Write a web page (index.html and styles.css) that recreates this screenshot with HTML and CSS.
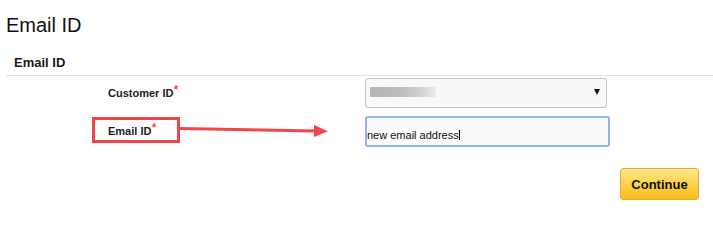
FILE: index.html
```html
<!DOCTYPE html>
<html lang="en">
<head>
<meta charset="utf-8">
<title>Email ID</title>
<link rel="stylesheet" href="styles.css">
</head>
<body>
<div class="page">
  <h1 class="title">Email ID</h1>
  <h2 class="section-head">Email ID</h2>
  <div class="form">
    <div class="label">Customer ID<span class="req">*</span></div>
    <div class="select">
      <span class="blurred"></span>
      <span class="caret-down"></span>
    </div>
    <div class="label">Email ID<span class="req">*</span></div>
    <div class="text-field">new email address<span class="cursor"></span></div>
  </div>
  <div class="actions">
    <button class="btn-continue" type="button">Continue</button>
  </div>
  <div class="annot-box"></div>
  <svg class="annot-arrow" width="152" height="20" viewBox="0 0 152 20">
    <path d="M3 8.5 L138 11" stroke="#f4454a" stroke-width="3.2" fill="none" stroke-linecap="round"/>
    <polygon points="136,5 150,11.3 136,17" fill="#f4454a"/>
  </svg>
</div>
</body>
</html>
```
FILE: styles.css
```css
body {
  margin: 0;
  background: #fff;
  color: #111;
  font-family: "Liberation Sans", Arial, sans-serif;
}

.page {
  position: relative;
  height: 208px;
  box-sizing: border-box;
  padding-top: 13px;
}

.title {
  margin: 0 0 0 6px;
  font-size: 20px;
  font-weight: normal;
  line-height: 24px;
  color: #111;
}

.section-head {
  margin: 18px 0 0 6px;
  padding: 0 0 4px 8px;
  font-size: 13px;
  font-weight: bold;
  line-height: 16px;
  color: #1a1a1a;
  border-bottom: 1px solid #e2e2e2;
}

.form {
  display: grid;
  grid-template-columns: 257px auto;
  row-gap: 8px;
  align-items: center;
  justify-items: start;
  padding-left: 108px;
  margin-top: 2px;
}

.label {
  font-size: 11px;
  font-weight: bold;
  line-height: 13px;
  color: #222;
}

.req {
  color: #e31b1b;
  font-size: 13px;
  font-weight: normal;
  vertical-align: 3px;
  line-height: 0;
}

.select {
  box-sizing: border-box;
  width: 242px;
  height: 30px;
  border: 1px solid #c3c3c3;
  border-radius: 3px;
  background: #f8f8f8;
  display: flex;
  align-items: center;
  justify-content: space-between;
  padding: 0 6px 2px 4px;
}

.blurred {
  display: block;
  width: 66px;
  height: 10px;
  background: linear-gradient(to right, #b6b6b6 0%, #bcbcbc 45%, #cfcfcf 75%, #ececec 100%);
  filter: blur(0.4px);
}

.caret-down {
  width: 0;
  height: 0;
  border-left: 3.5px solid transparent;
  border-right: 3.5px solid transparent;
  border-top: 6px solid #111;
}

.text-field {
  box-sizing: border-box;
  width: 245px;
  height: 31px;
  border: 2px solid #8db4ee;
  border-radius: 3px;
  background: #fafafa;
  padding: 11px 0 0 0;
  font-size: 11px;
  line-height: 13px;
  color: #111;
}

.cursor {
  display: inline-block;
  width: 1px;
  height: 10px;
  background: #000;
  vertical-align: -1px;
}

.actions {
  display: flex;
  justify-content: flex-end;
  padding-right: 14px;
  margin-top: 21px;
}

.btn-continue {
  box-sizing: border-box;
  width: 79px;
  height: 32px;
  border: 1px solid #e6a63a;
  border-radius: 3px;
  background: linear-gradient(to bottom, #ffe68c 0%, #fdd550 45%, #f8bb1a 100%);
  font-family: "Liberation Sans", Arial, sans-serif;
  font-size: 13px;
  font-weight: bold;
  color: #111;
  padding: 0;
}

.annot-box {
  position: absolute;
  left: 92px;
  top: 117px;
  width: 88px;
  height: 26px;
  box-sizing: border-box;
  border: 3px solid #f24549;
}

.annot-arrow {
  position: absolute;
  left: 178px;
  top: 120px;
}
```
